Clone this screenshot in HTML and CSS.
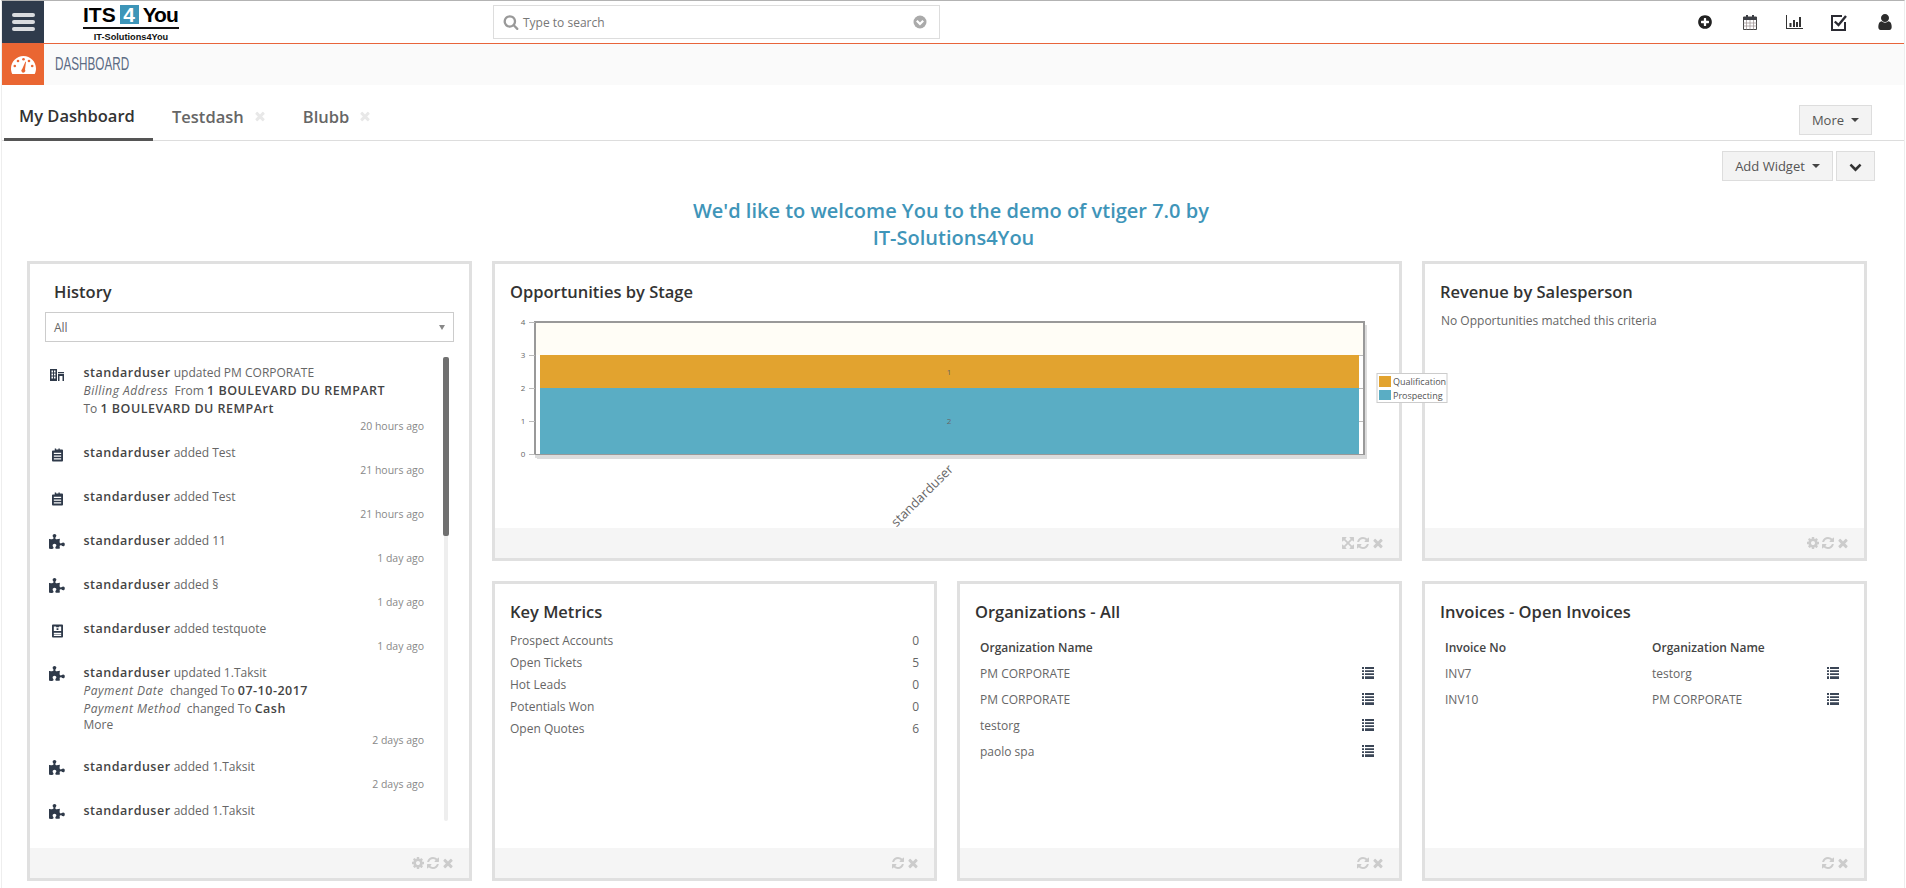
FILE: index.html
```html
<!DOCTYPE html>
<html lang="en">
<head>
<meta charset="utf-8">
<title>Dashboard</title>
<link rel="stylesheet" href="styles.css">
</head>
<body>
<svg class="defs" aria-hidden="true">
  <symbol id="i-search" viewBox="0 0 1792 1792"><path d="M1216 832q0-185-131.500-316.500t-316.500-131.500-316.500 131.500-131.500 316.500 131.500 316.500 316.500 131.500 316.500-131.500 131.500-316.500zm512 832q0 52-38 90t-90 38q-54 0-90-38l-343-342q-179 124-399 124-143 0-273.500-55.500t-225-150-150-225-55.500-273.500 55.500-273.500 150-225 225-150 273.500-55.500 273.500 55.500 225 150 150 225 55.500 273.500q0 220-124 399l343 343q37 37 37 90z"/></symbol>
  <symbol id="i-times" viewBox="0 0 1792 1792"><path d="M1490 1322q0 40-28 68l-136 136q-28 28-68 28t-68-28l-294-294-294 294q-28 28-68 28t-68-28l-136-136q-28-28-28-68t28-68l294-294-294-294q-28-28-28-68t28-68l136-136q28-28 68-28t68 28l294 294 294-294q28-28 68-28t68 28l136 136q28 28 28 68t-28 68l-294 294 294 294q28 28 28 68z"/></symbol>
  <symbol id="i-refresh" viewBox="0 0 1792 1792"><path d="M1639 1056q0 5-1 7-64 268-268 434.500t-478 166.500q-146 0-282.500-55t-243.500-157l-129 129q-19 19-45 19t-45-19-19-45v-448q0-26 19-45t45-19h448q26 0 45 19t19 45-19 45l-137 137q71 66 161 102t187 36q134 0 250-65t186-179q11-17 53-117 8-23 30-23h192q13 0 22.500 9.500t9.500 22.500zm25-800v448q0 26-19 45t-45 19h-448q-26 0-45-19t-19-45 19-45l138-138q-148-137-349-137-134 0-250 65t-186 179q-11 17-53 117-8 23-30 23h-199q-13 0-22.500-9.500t-9.500-22.500v-7q65-268 270-434.500t480-166.500q146 0 284 55.500t245 156.500l130-129q19-19 45-19t45 19 19 45z"/></symbol>
  <symbol id="i-cog" viewBox="0 0 1792 1792"><path d="M1152 896q0-106-75-181t-181-75-181 75-75 181 75 181 181 75 181-75 75-181zm512-109v222q0 12-8 23t-20 13l-185 28q-19 54-39 91 35 50 107 138 10 12 10 25t-9 23q-27 37-99 108t-94 71q-12 0-26-9l-138-108q-44 23-91 38-16 136-29 186-7 28-36 28h-222q-14 0-24.500-8.500t-11.500-21.500l-28-184q-49-16-90-37l-141 107q-10 9-25 9-14 0-25-11-126-114-165-168-7-10-7-23 0-12 8-23 15-21 51-66.500t54-70.500q-27-50-41-99l-183-27q-13-2-21-12.500t-8-23.500v-222q0-12 8-23t19-13l186-28q14-46 39-92-40-57-107-138-10-12-10-24 0-10 9-23 26-36 98.500-107.500t94.500-71.500q13 0 26 10l138 107q44-23 91-38 16-136 29-186 7-28 36-28h222q14 0 24.500 8.500t11.500 21.500l28 184q49 16 90 37l142-107q9-9 24-9 13 0 25 10 129 119 165 170 7 8 7 22 0 12-8 23-15 21-51 66.500t-54 70.500q26 50 41 98l183 28q13 2 21 12.500t8 23.500z"/></symbol>
  <symbol id="i-expand" viewBox="0 0 1792 1792"><path d="M1411 541l-355 355 355 355 144-144q29-31 70-14 39 17 39 59v448q0 26-19 45t-45 19h-448q-42 0-59-40-17-39 14-69l144-144-355-355-355 355 144 144q31 30 14 69-17 40-59 40h-448q-26 0-45-19t-19-45v-448q0-42 40-59 39-17 69 14l144 144 355-355-355-355-144 144q-19 19-45 19-12 0-24-5-40-17-40-59v-448q0-26 19-45t45-19h448q42 0 59 40 17 39-14 69l-144 144 355 355 355-355-144-144q-31-30-14-69 17-40 59-40h448q26 0 45 19t19 45v448q0 42-39 59-13 5-25 5-26 0-45-19z"/></symbol>
  <symbol id="i-puzzle" viewBox="0 0 1792 1792"><path d="M1664 1098q0 81-44.500 135t-123.500 54q-41 0-77.500-17.500t-59-38-56.500-38-71-17.500q-110 0-110 124 0 39 16 115t15 115v5q-22 0-33 1-34 3-97.500 11.500t-115.500 13.500-98 5q-61 0-103-26.500t-42-83.500q0-37 17.500-71t38-56.500 38-59 17.500-77.500q0-79-54-123.500t-135-44.500q-84 0-143 45.500t-59 127.500q0 43 15 83t33.500 64.500 33.500 53 15 50.500q0 45-46 89-37 35-117 35-95 0-245-24-9-2-27.500-4t-27.500-4l-13-2q-1 0-3-1-2 0-2-1v-1024q2 1 17.500 3.500t34 5 21.500 3.500q150 24 245 24 80 0 117-35 46-44 46-89 0-22-15-50.500t-33.500-53-33.500-64.500-15-83q0-82 59-127.500t144-45.500q80 0 134 44.500t54 123.500q0 41-17.500 77.500t-38 59-38 56.500-17.500 71q0 57 42 83.500t103 26.500q64 0 180-15t163-17v2q-1 2-3.500 17.500t-5 34-3.500 21.500q-24 150-24 245 0 80 35 117 44 46 89 46 22 0 50.500-15t53-33.500 64.500-33.500 83-15q82 0 127.500 59t45.500 143z"/></symbol>
  <symbol id="i-plus" viewBox="0 0 1792 1792"><path d="M1344 960v-128q0-26-19-45t-45-19h-256v-256q0-26-19-45t-45-19h-128q-26 0-45 19t-19 45v256h-256q-26 0-45 19t-19 45v128q0 26 19 45t45 19h256v256q0 26 19 45t45 19h128q26 0 45-19t19-45v-256h256q26 0 45-19t19-45zm320-64q0 209-103 385.500t-279.500 279.500-385.500 103-385.500-103-279.500-279.500-103-385.500 103-385.500 279.500-279.500 385.500-103 385.500 103 279.500 279.500 103 385.500z"/></symbol>
  <symbol id="i-user" viewBox="0 0 1792 1792"><path d="M1536 1399q0 109-62.500 187t-150.500 78h-854q-88 0-150.500-78t-62.500-187q0-85 8.500-160.500t31.500-152 58.500-131 94-89 134.500-34.500q131 128 313 128t313-128q76 0 134.500 34.500t94 89 58.500 131 31.500 152 8.500 160.500zm-256-887q0 159-112.500 271.500t-271.500 112.500-271.500-112.500-112.500-271.500 112.500-271.500 271.500-112.500 271.500 112.500 112.500 271.500z"/></symbol>
  <symbol id="i-chevron" viewBox="0 0 1792 1792"><path d="M1683 808l-742 741q-19 19-45 19t-45-19l-742-741q-19-19-19-45.500t19-45.500l166-165q19-19 45-19t45 19l531 531 531-531q19-19 45-19t45 19l166 165q19 19 19 45.500t-19 45.500z"/></symbol>
  <symbol id="i-list" viewBox="0 0 12 12"><path d="M0 0h2v2H0zM3 0h9v2H3zM0 3.300h2v1.700H0zM3 3.300h9v1.700H3zM0 6.300h2v1.700H0zM3 6.300h9v1.700H3zM0 9.300h2V12H0zM3 9.300h9V12H3z"/></symbol>
  <symbol id="i-building" viewBox="0 0 14 14"><path fill-rule="evenodd" d="M0 1h7v12H0zM1.500 2.500v2h1.500v-2zM4 2.500v2h1.500v-2zM1.500 5.500v2h1.500v-2zM4 5.500v2h1.500v-2zM1.500 8.500v2h1.500v-2zM4 8.500v2h1.500v-2z"/><path fill-rule="evenodd" d="M8 4h6v1.300H8zM8 6h6v7h-1.500V8h-3v5H8z"/></symbol>
  <symbol id="i-note" viewBox="0 0 12 14"><path fill-rule="evenodd" d="M3 0h1.500v1H7V0h1.500v1H11q1 0 1 1v11q0 1-1 1H1q-1 0-1-1V3q0-1 1-1h2zM2 4.500v1.500h8V4.500zM2 7.500v1.500h8V7.500zM2 10.500v1.500h8v-1.500z"/></symbol>
  <symbol id="i-quote" viewBox="0 0 12 14"><path fill-rule="evenodd" d="M1 0h10q1 0 1 1v12q0 1-1 1H1q-1 0-1-1V1q0-1 1-1zM2 2v5h8V2H7.500v1h-3V2zM5 4h2v2H5zM2 9v1.500h8V9zM2 11v1.500h8V11z"/></symbol>
</svg>

<div class="page">
  <header class="topbar">
    <button class="burger" aria-label="Menu"><span></span><span></span><span></span></button>
    <div class="logo">
      <div class="logo-mark"><span>ITS</span><span class="logo-four">4</span><span class="logo-you">You</span></div>
      <div class="logo-sub">IT-Solutions4You</div>
    </div>
    <div class="search">
      <svg class="search-icon"><use href="#i-search"/></svg>
      <span class="search-text">Type to search</span>
      <svg class="search-drop" viewBox="0 0 14 14"><circle cx="7" cy="7" r="6.500"/><path d="M3.800 5.800 7 9l3.200-3.200"/></svg>
    </div>
    <nav class="quick">
      <span class="quick-item"><svg class="qi-plus"><use href="#i-plus"/></svg></span>
      <span class="quick-item"><svg class="qi-cal" viewBox="0 0 14 16"><path class="cal-frame" d="M.5 3h13v12.500H.5z"/><path class="cal-head" d="M.5 3h13v3H.5zM3 1h2v3.500H3zM9 1h2v3.500H9z"/><path class="cal-grid" d="M3.500 6v9.500M7 6v9.500M10.500 6v9.500M.5 9h13M.5 12h13"/></svg></span>
      <span class="quick-item"><svg class="qi-chart" viewBox="0 0 17 14"><path d="M0 0h1v13h16v1H0zM3.500 8h2v4h-2zM7 5h2v7H7zM10 7h2v5h-2zM13 2h2v10h-2z"/></svg></span>
      <span class="quick-item"><svg class="qi-check" viewBox="0 0 17 17"><path class="chk-box" d="M14 8v8H1V2h10"/><path class="chk-tick" d="M3.800 7.500 7.500 11 15 2"/></svg></span>
      <span class="quick-item"><svg class="qi-user" viewBox="224 128 1344 1536"><use href="#i-user" x="0" y="0" width="1792" height="1792"/></svg></span>
    </nav>
  </header>

  <div class="subbar">
    <div class="module-icon">
      <svg class="gauge" viewBox="0 0 25 18"><path class="gauge-dome" d="M12.500 0C5.600 0 0 5.600 0 12.500c0 2 .4 3.700 1.300 5.500h22.400c.9-1.800 1.300-3.500 1.300-5.500C25 5.600 19.400 0 12.500 0z"/><circle class="gauge-dot" cx="12.500" cy="3.200" r="1.300"/><circle class="gauge-dot" cx="7" cy="5" r="1.300"/><circle class="gauge-dot" cx="18" cy="5" r="1.300"/><circle class="gauge-dot" cx="3.800" cy="10" r="1.300"/><circle class="gauge-dot" cx="21.200" cy="10" r="1.300"/><path class="gauge-dot" d="M14.500 5.500 15 6l-1 7.500a2 2 0 1 1-2.800-.5z"/></svg>
    </div>
    <span class="module-name">DASHBOARD</span>
  </div>

  <div class="tabs">
    <a class="tab tab-active">My Dashboard</a>
    <a class="tab">Testdash<svg class="tab-x"><use href="#i-times"/></svg></a>
    <a class="tab tab-last">Blubb<svg class="tab-x"><use href="#i-times"/></svg></a>
    <button class="btn btn-more">More<i class="caret"></i></button>
  </div>

  <div class="toolbar">
    <button class="btn btn-add">Add Widget<i class="caret"></i></button>
    <button class="btn btn-chev"><svg class="chev"><use href="#i-chevron"/></svg></button>
  </div>

  <h1 class="welcome">We'd like to welcome You to the demo of vtiger 7.0 by&nbsp;<br>IT-Solutions4You</h1>

  <main class="grid">
    <section class="card card-history">
      <h2 class="card-title card-title-history">History</h2>
      <div class="select"><span>All</span><i class="select-caret"></i></div>
      <div class="history">
        <ul class="feed">
          <li class="entry"><svg class="entry-icon"><use href="#i-building"/></svg><div class="entry-body"><p class="line"><b>standarduser</b> updated PM CORPORATE</p><p class="line"><em>Billing Address</em>&nbsp; From <b>1 BOULEVARD DU REMPART</b></p><p class="line">To <b>1 BOULEVARD DU REMPArt</b></p><p class="when">20 hours ago</p></div></li>
          <li class="entry"><svg class="entry-icon entry-note"><use href="#i-note"/></svg><div class="entry-body"><p class="line"><b>standarduser</b> added Test</p><p class="when">21 hours ago</p></div></li>
          <li class="entry"><svg class="entry-icon entry-note"><use href="#i-note"/></svg><div class="entry-body"><p class="line"><b>standarduser</b> added Test</p><p class="when">21 hours ago</p></div></li>
          <li class="entry"><svg class="entry-icon entry-fa"><use href="#i-puzzle"/></svg><div class="entry-body"><p class="line"><b>standarduser</b> added 11</p><p class="when">1 day ago</p></div></li>
          <li class="entry"><svg class="entry-icon entry-fa"><use href="#i-puzzle"/></svg><div class="entry-body"><p class="line"><b>standarduser</b> added §</p><p class="when">1 day ago</p></div></li>
          <li class="entry"><svg class="entry-icon entry-note"><use href="#i-quote"/></svg><div class="entry-body"><p class="line"><b>standarduser</b> added testquote</p><p class="when">1 day ago</p></div></li>
          <li class="entry"><svg class="entry-icon entry-fa"><use href="#i-puzzle"/></svg><div class="entry-body"><p class="line"><b>standarduser</b> updated 1.Taksit</p><p class="line"><em>Payment Date</em>&nbsp; changed To <b>07-10-2017</b></p><p class="line"><em>Payment Method</em>&nbsp; changed To <b>Cash</b></p><p class="line more">More</p><p class="when">2 days ago</p></div></li>
          <li class="entry"><svg class="entry-icon entry-fa"><use href="#i-puzzle"/></svg><div class="entry-body"><p class="line"><b>standarduser</b> added 1.Taksit</p><p class="when">2 days ago</p></div></li>
          <li class="entry"><svg class="entry-icon entry-fa"><use href="#i-puzzle"/></svg><div class="entry-body"><p class="line"><b>standarduser</b> added 1.Taksit</p></div></li>
        </ul>
        <div class="track"><div class="thumb"></div></div>
      </div>
      <footer class="card-foot card-foot-end"><svg class="fi"><use href="#i-cog"/></svg><svg class="fi"><use href="#i-refresh"/></svg><svg class="fi"><use href="#i-times"/></svg></footer>
    </section>

    <section class="card card-chart">
      <h2 class="card-title">Opportunities by Stage</h2>
      <div class="card-body chart-body">
        <svg class="chart" viewBox="495 308 904 220">
          <rect class="plot-shadow" x="537" y="325" width="830" height="134"/>
          <rect class="plot-bg" x="536" y="323" width="828" height="132"/>
          <rect class="plot-side" x="536" y="355" width="828" height="99"/>
          <rect class="bar-orange" x="540" y="355" width="819" height="33"/>
          <rect class="bar-blue" x="540" y="388" width="819" height="66"/>
          <path class="grid-line" d="M1359 355.500h5M1359 388.500h5M1359 421.500h5"/>
          <path class="plot-frame" d="M535 455V322h829v133"/>
          <path class="plot-base" d="M535 454.500h829"/>
          <path class="tick" d="M529 322.500h6M529 355.500h6M529 388.500h6M529 421.500h6M529 454.500h6M536 455v3"/>
          <text class="tick-label" x="523" y="325">4</text>
          <text class="tick-label" x="523" y="358">3</text>
          <text class="tick-label" x="523" y="391">2</text>
          <text class="tick-label" x="523" y="424">1</text>
          <text class="tick-label" x="523" y="457">0</text>
          <text class="tick-label" x="949" y="375">1</text>
          <text class="tick-label" x="949" y="424">2</text>
          <text class="axis-label" transform="translate(954 470) rotate(-45)" x="0" y="0">standarduser</text>
          <rect class="legend-box" x="1377" y="373.500" width="70" height="29"/>
          <rect class="bar-orange" x="1379" y="376" width="12" height="11"/>
          <rect class="bar-blue" x="1379" y="390" width="12" height="10"/>
          <text class="legend-label" x="1393" y="384.500">Qualification</text>
          <text class="legend-label" x="1393" y="398.500">Prospecting</text>
        </svg>
      </div>
      <footer class="card-foot"><svg class="fi"><use href="#i-expand"/></svg><svg class="fi"><use href="#i-refresh"/></svg><svg class="fi"><use href="#i-times"/></svg></footer>
    </section>

    <section class="card">
      <h2 class="card-title">Revenue by Salesperson</h2>
      <div class="card-body"><p class="empty">No Opportunities matched this criteria</p></div>
      <footer class="card-foot"><svg class="fi"><use href="#i-cog"/></svg><svg class="fi"><use href="#i-refresh"/></svg><svg class="fi"><use href="#i-times"/></svg></footer>
    </section>

    <section class="card">
      <h2 class="card-title">Key Metrics</h2>
      <div class="card-body metrics">
        <div class="metric"><span>Prospect Accounts</span><span>0</span></div>
        <div class="metric"><span>Open Tickets</span><span>5</span></div>
        <div class="metric"><span>Hot Leads</span><span>0</span></div>
        <div class="metric"><span>Potentials Won</span><span>0</span></div>
        <div class="metric"><span>Open Quotes</span><span>6</span></div>
      </div>
      <footer class="card-foot"><svg class="fi"><use href="#i-refresh"/></svg><svg class="fi"><use href="#i-times"/></svg></footer>
    </section>

    <section class="card">
      <h2 class="card-title">Organizations - All</h2>
      <div class="card-body">
        <div class="tbl tbl-org">
          <div class="tbl-row tbl-head"><span>Organization Name</span></div>
          <div class="tbl-row"><span>PM CORPORATE</span><svg class="li"><use href="#i-list"/></svg></div>
          <div class="tbl-row"><span>PM CORPORATE</span><svg class="li"><use href="#i-list"/></svg></div>
          <div class="tbl-row"><span>testorg</span><svg class="li"><use href="#i-list"/></svg></div>
          <div class="tbl-row"><span>paolo spa</span><svg class="li"><use href="#i-list"/></svg></div>
        </div>
      </div>
      <footer class="card-foot"><svg class="fi"><use href="#i-refresh"/></svg><svg class="fi"><use href="#i-times"/></svg></footer>
    </section>

    <section class="card">
      <h2 class="card-title">Invoices - Open Invoices</h2>
      <div class="card-body">
        <div class="tbl tbl-inv">
          <div class="tbl-row tbl-head"><span>Invoice No</span><span>Organization Name</span></div>
          <div class="tbl-row"><span>INV7</span><span>testorg</span><svg class="li"><use href="#i-list"/></svg></div>
          <div class="tbl-row"><span>INV10</span><span>PM CORPORATE</span><svg class="li"><use href="#i-list"/></svg></div>
        </div>
      </div>
      <footer class="card-foot"><svg class="fi"><use href="#i-refresh"/></svg><svg class="fi"><use href="#i-times"/></svg></footer>
    </section>
  </main>
</div>
</body>
</html>
```

FILE: styles.css
```css
* { box-sizing: border-box; }
html, body { margin: 0; height: 100%; overflow: hidden; background: #fff; }
body { font-family: "Open Sans", "Liberation Sans", sans-serif; font-size: 12px; color: #666; }
svg { display: block; }
.defs { width: 0; height: 0; position: absolute; }
p, h1, h2, ul { margin: 0; padding: 0; }
ul { list-style: none; }

.page { height: 888px; margin: 0 1px; border-left: 1px solid #eee; border-right: 1px solid #eee; border-top: 1px solid #b3b3b3; }

.topbar { display: flex; align-items: stretch; height: 42px; border-bottom: 1px solid #e8643a; box-sizing: content-box; }
.burger { width: 42px; padding: 0; border: 0; background: #2f3b4c; display: flex; flex-direction: column; justify-content: center; align-items: center; gap: 3px; }
.burger span { width: 23px; height: 4px; border-radius: 2px; background: #d9dbdf; }
.logo { width: 96px; margin-left: 39px; padding-top: 3px; flex: none; }
.logo-mark { display: flex; align-items: center; height: 21px; font-family: "Liberation Sans", sans-serif; font-weight: 700; font-size: 21px; color: #000; }
.logo-four { flex: none; width: 19px; height: 19px; line-height: 20px; text-align: center; background: #3d95b8; color: #fff; margin: 0 4px; }
.logo-you { letter-spacing: -1px; }
.logo-sub { margin-top: 2px; border-top: 2px solid #111; padding-top: 2px; text-align: center; font-family: "Liberation Sans", sans-serif; font-weight: 700; font-size: 9.200px; line-height: 12px; color: #111; }
.search { width: 447px; height: 34px; margin: 4px 0 0 314px; border: 1px solid #ddd; display: flex; align-items: center; padding: 0 12px 0 9px; flex: none; }
.search-icon { width: 16px; height: 16px; fill: #999; margin-right: 4px; }
.search-text { flex: 1; color: #777; font-size: 12px; }
.search-drop { width: 14px; height: 14px; }
.search-drop circle { fill: #aaa; }
.search-drop path { fill: none; stroke: #fff; stroke-width: 2.2; }
.quick { margin-left: auto; margin-right: -3px; display: flex; align-items: center; }
.quick-item { width: 45px; height: 42px; display: flex; align-items: center; justify-content: center; }
.qi-plus { width: 16px; height: 16px; fill: #222; }
.qi-cal { width: 14px; height: 16px; }
.cal-frame { fill: #fff; stroke: #444; stroke-width: 1; }
.cal-head { fill: #3c3f46; }
.cal-grid { fill: none; stroke: #9c8f8f; stroke-width: .7; }
.qi-chart { width: 17px; height: 14px; fill: #333; }
.qi-check { width: 17px; height: 17px; }
.chk-box { fill: none; stroke: #2b2b33; stroke-width: 2; }
.chk-tick { fill: none; stroke: #2b2b33; stroke-width: 2.4; }
.qi-user { width: 14px; height: 16px; fill: #2c2c2c; }

.subbar { display: flex; align-items: center; height: 41px; background: #fafafa; }
.module-icon { width: 42px; height: 41px; background: #ea6632; display: flex; align-items: center; justify-content: center; }
.gauge { width: 25px; height: 18px; }
.gauge-dome { fill: #fff; }
.gauge-dot { fill: #ea6632; }
.module-name { margin-left: 11px; font-family: "Liberation Sans", sans-serif; font-size: 18px; color: #5c6b84; display: inline-block; transform: scaleX(.65); transform-origin: left center; }

.tabs { display: flex; align-items: stretch; height: 56px; border-bottom: 1px solid #ddd; padding-left: 2px; }
.tab { display: flex; align-items: center; padding: 7px 0 0; font-size: 16.500px; font-weight: 600; color: #666; margin-left: 19px; }
.tab-active { color: #333; margin-left: 0; width: 149px; padding-left: 15px; border-bottom: 3px solid #555; height: 56px; }
.tab-last { margin-left: 36px; }
.tab-x { width: 14px; height: 14px; fill: #e8e8e8; margin-left: 9px; }
.btn { border: 1px solid #ddd; background: #f3f3f3; color: #555; font-family: inherit; font-size: 13px; height: 30px; padding: 0; display: inline-flex; align-items: center; justify-content: center; }
.btn-more { width: 73px; margin: 20px 32px 0 auto; }
.caret { display: inline-block; margin-left: 7px; border-top: 4px solid #444; border-left: 4px solid transparent; border-right: 4px solid transparent; }

.toolbar { display: flex; justify-content: flex-end; gap: 3px; padding: 10px 29px 0 0; }
.btn-add { width: 111px; }
.btn-chev { width: 39px; }
.chev { width: 13px; height: 13px; fill: #333; }

.welcome { margin: 16px 0 0; padding-left: 1px; text-align: center; color: #3f95b9; font-size: 20px; font-weight: 600; line-height: 27px; height: 54px; }

.grid { margin: 10px 0 0 25px; display: grid; grid-template-columns: repeat(4, 445px); grid-template-rows: 300px 300px; gap: 20px; }
.card { border: 3px solid #e0e0e0; display: flex; flex-direction: column; background: #fff; min-width: 0; }
.card-history { grid-row: span 2; }
.card-chart { grid-column: span 2; position: relative; z-index: 2; }
.card-title { font-size: 16.500px; font-weight: 600; color: #333; line-height: 22px; padding: 17px 15px 5px; height: 44px; }
.card-title-history { padding-left: 24px; }
.card-body { flex: 1; min-height: 0; padding: 0 16px; }
.card-foot { height: 30px; background: #f5f5f5; display: flex; justify-content: flex-end; align-items: center; gap: 1px; padding-right: 14px; flex: none; }
.card-foot-end { margin-top: auto; }
.fi { width: 14px; height: 14px; fill: #ccc; }

.select { margin: 4px 15px 0; height: 30px; border: 1px solid #ccc; display: flex; align-items: center; justify-content: space-between; padding: 1px 8px 0; color: #666; font-size: 12px; }
.select-caret { border-top: 5px solid #888; border-left: 3.500px solid transparent; border-right: 3.500px solid transparent; }
.history { display: flex; margin: 15px 0 0 15px; height: 464px; flex: none; }
.feed { width: 379px; padding: 7px 0 0 5px; }
.entry { display: flex; margin-bottom: 10px; }
.entry:last-child { margin-bottom: 0; }
.entry-icon { width: 14px; height: 14px; fill: #2f3a4a; margin-top: 4px; flex: none; }
.entry-fa { width: 17px; height: 17px; margin: 2px -1.500px 0; }
.entry-note { width: 11px; margin-left: 1.500px; margin-right: 1.500px; }
.entry-body { flex: 1; margin-left: 19.500px; }
.line { line-height: 18px; font-size: 12px; color: #666; }
.line b { font-weight: 600; color: #444; font-size: 12.500px; letter-spacing: .5px; }
.line em { font-style: italic; letter-spacing: .5px; }
.more { line-height: 14px; }
.when { font-size: 10.500px; line-height: 16px; text-align: right; color: #888; }
.track { width: 4px; margin-left: 20px; background: #eee; border-radius: 2px; }
.thumb { width: 6px; height: 179px; margin-left: -1px; background: #707070; border-radius: 2px; }

.chart-body { padding: 0; overflow: visible; }
.chart { width: 904px; height: 220px; overflow: visible; }
.plot-shadow { fill: #dcdcdc; }
.plot-bg { fill: #fffdf6; }
.plot-side { fill: #fff; }
.bar-orange { fill: #e2a32f; }
.bar-blue { fill: #5aadc4; }
.grid-line { stroke: #bbb; fill: none; }
.plot-frame { fill: none; stroke: #999; stroke-width: 2; }
.plot-base { fill: none; stroke: #999; stroke-width: 1; }
.tick { stroke: #bbb; fill: none; }
.tick-label { font-size: 8px; fill: #666; text-anchor: middle; }
.axis-label { font-size: 13px; fill: #666; text-anchor: end; }
.legend-box { fill: #fff; stroke: #ccc; stroke-width: 1; }
.legend-label { font-size: 9px; fill: #545454; }

.empty { padding-top: 4px; line-height: 18px; }
.metrics { padding-top: 2px; }
.metric { display: flex; justify-content: space-between; height: 22px; line-height: 22px; margin: 0 -1px; }

.tbl { padding: 6px 9px 0 4px; }
.tbl-row { display: grid; align-items: center; height: 26px; }
.tbl-org .tbl-row { grid-template-columns: 1fr 12px; }
.tbl-inv .tbl-row { grid-template-columns: 207px 1fr 12px; }
.tbl-head { font-weight: 600; color: #444; }
.li { width: 12px; height: 12px; fill: #3b4656; }
```
